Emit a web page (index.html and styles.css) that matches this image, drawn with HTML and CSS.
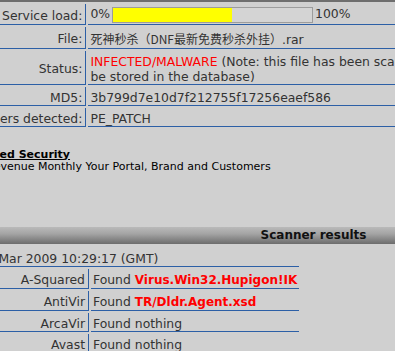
FILE: index.html
```html
<!DOCTYPE html>
<html lang="en">
<head>
  <meta charset="UTF-8" />
  <title>File scan</title>
  <link rel="stylesheet" href="styles.css">
</head>
<body>
<div class="page">

  <div class="bar bar-end"></div>

  <table class="info">
    <tr>
      <th>Service load:</th>
      <td class="load">0%<span class="meter"><span class="fill" style="width: 60%;"></span></span>100%</td>
    </tr>
    <tr>
      <th>File:</th>
      <td><span class="cjk">死神秒杀（DNF最新免费秒杀外挂）</span>.rar</td>
    </tr>
    <tr>
      <th>Status:</th>
      <td><span class="bad">INFECTED/MALWARE</span> (Note: this file has been scanned before. Therefore, this file's scan results will not<br>be stored in the database)</td>
    </tr>
    <tr>
      <th>MD5:</th>
      <td>3b799d7e10d7f212755f17256eaef586</td>
    </tr>
    <tr>
      <th>Scanners detected:</th>
      <td>PE_PATCH</td>
    </tr>
  </table>

  <div class="ad">
    <a href="#">Managed Security</a>
    <p>Earn Revenue Monthly Your Portal, Brand and Customers</p>
  </div>

  <div class="bar">Scanner results</div>

  <table class="results">
    <tr>
      <td colspan="2" class="date">Fri 13 Mar 2009 10:29:17 (GMT)</td>
    </tr>
    <tr>
      <th>A-Squared</th>
      <td>Found <b class="bad">Virus.Win32.Hupigon!IK</b></td>
    </tr>
    <tr>
      <th>AntiVir</th>
      <td>Found <b class="bad">TR/Dldr.Agent.xsd</b></td>
    </tr>
    <tr>
      <th>ArcaVir</th>
      <td>Found nothing</td>
    </tr>
    <tr>
      <th>Avast</th>
      <td>Found nothing</td>
    </tr>
    <tr>
      <th>AVG</th>
      <td>Found nothing</td>
    </tr>
  </table>

</div>
</body>
</html>
```

FILE: styles.css
```css
body {
  margin: 0;
  background-color: #d0d0d0;
  font-family: "DejaVu Sans", Verdana, sans-serif;
  font-size: 12.4px;
  line-height: 15px;
  color: #333;
  overflow: hidden;
}

.page {
  margin-left: -42px;
  width: 711px;
}

.bar {
  height: 17px;
  line-height: 17px;
  background: linear-gradient(#bababa, #a4a4a4 40%, #6c6c6c);
  color: #111;
  font-size: 12px;
  font-weight: bold;
  text-align: center;
}

.bar-end {
  height: 2px;
  background: #6e6e6e;
}

table {
  border-spacing: 2px;
}

th, td {
  padding: 3px 2px 0 2px;
  border-bottom: 1px solid #2c5fa6;
  text-align: left;
  white-space: nowrap;
}

th {
  width: 123px;
  padding-right: 3px;
  border-right: 1px solid #2c5fa6;
  text-align: right;
  font-weight: normal;
}

.load {
  padding-top: 2px;
  padding-bottom: 1px;
}

.meter {
  display: inline-block;
  vertical-align: middle;
  width: 199px;
  height: 14px;
  margin: 0 2px;
  border: 1px solid #9c9c9c;
  background-color: #d4d4d4;
}

.fill {
  display: block;
  height: 100%;
  background-color: #ffff00;
}

.cjk {
  font-family: "Noto Sans CJK SC", sans-serif;
  font-size: 12px;
  line-height: 18px;
}

.bad {
  color: #ff0000;
}

b.bad {
  font-size: 12px;
}

.ad {
  margin: 20px 0 54px;
  font-size: 11px;
  line-height: 12px;
  color: #000;
}

.ad a {
  color: #000;
  font-weight: bold;
}

.ad p {
  margin: 0;
}

.results {
  margin-top: 1px;
}

.date {
  padding-top: 4px;
  padding-left: 0;
}
```
